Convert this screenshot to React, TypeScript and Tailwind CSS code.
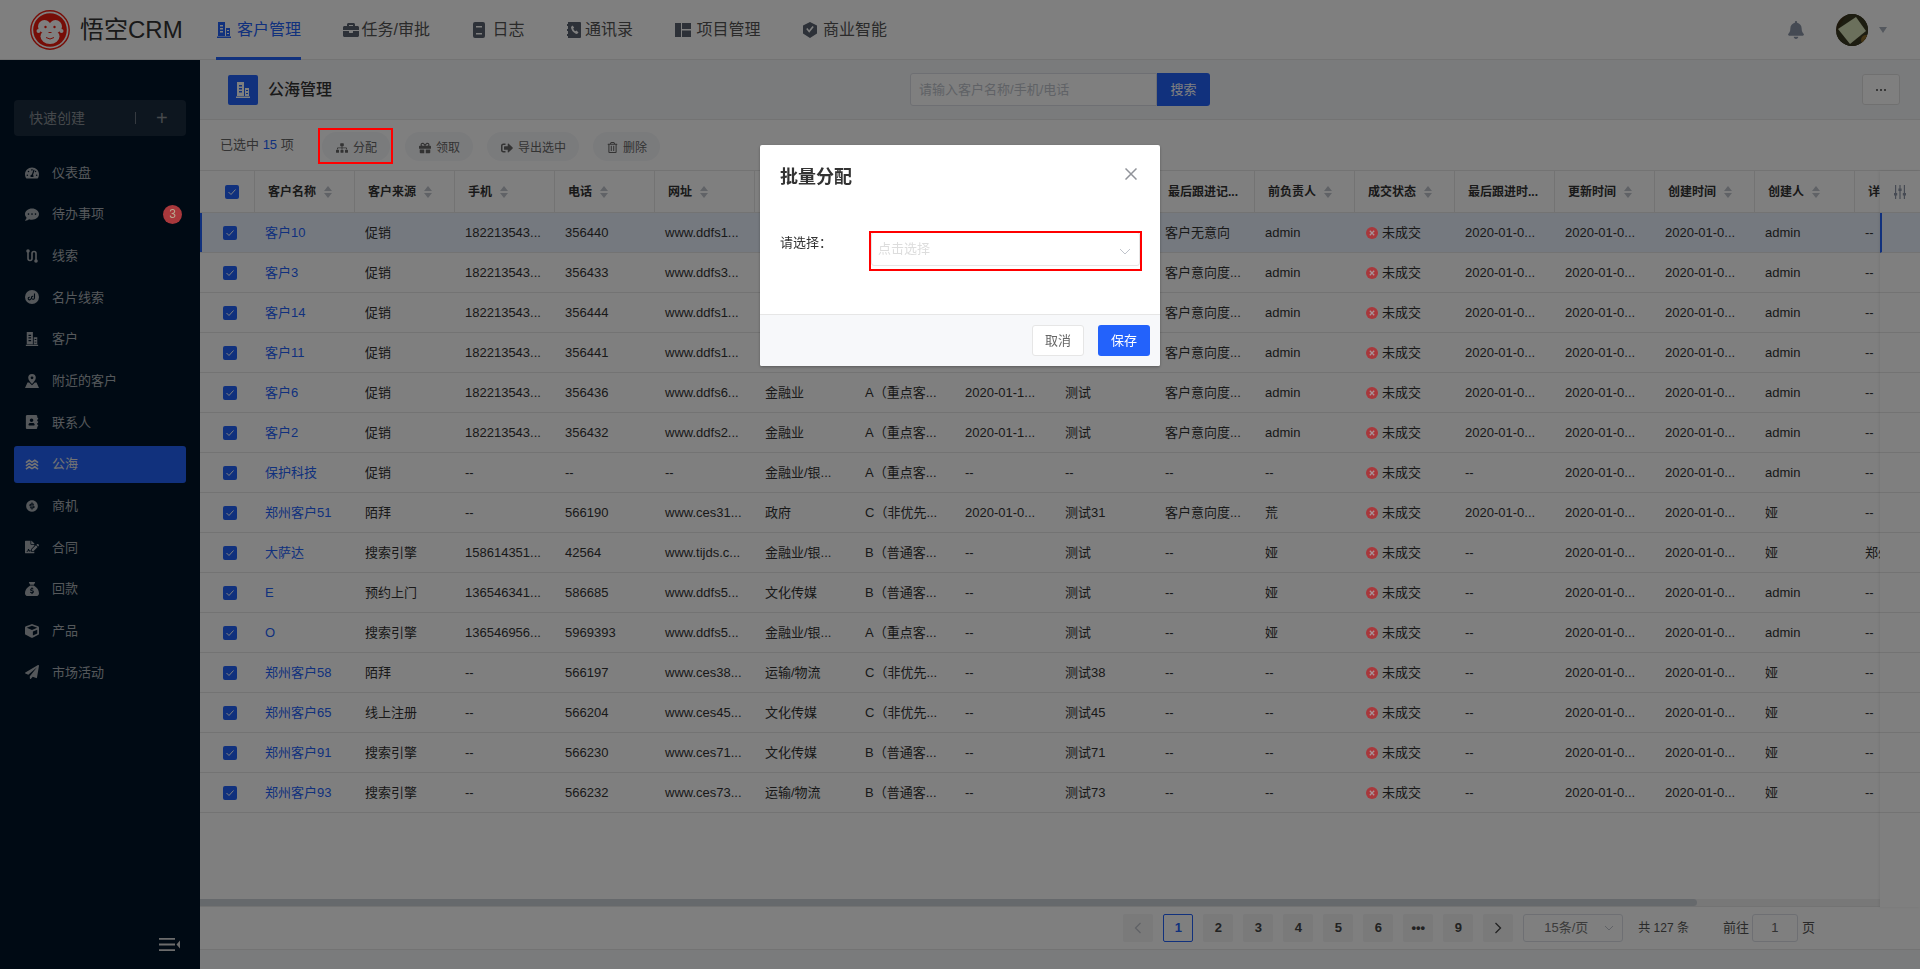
import type { ReactNode } from 'react';
import {
  FaAddressBook,
  FaBell,
  FaBriefcase,
  FaCommentDots,
  FaCube,
  FaFileSignature,
  FaGift,
  FaPaperPlane,
  FaRegTrashAlt,
  FaSignOutAlt,
  FaSitemap,
  FaTachometerAlt,
} from 'react-icons/fa';
import { FaSackDollar } from 'react-icons/fa6';
import { RiMoneyDollarCircleFill } from 'react-icons/ri';

function BuildingIcon({ size = 16 }: { size?: number }) {
  return (
    <svg width={size} height={size} viewBox="0 0 16 16" fill="currentColor">
      <path
        fillRule="evenodd"
        d="M2 0h7v14H2V0zm2 3v1.500h3V3H4zm0 3v1.500h3V6H4zm0 3v1.500h3V9H4zm6-3h4v8h-4V6zm1 2v1h2V8h-2zm0 3v1h2v-1h-2zM1 14.500h14V16H1v-1.500z"
      />
    </svg>
  );
}

function LogIcon() {
  return (
    <svg width="16" height="16" viewBox="0 0 16 16" fill="currentColor">
      <path fillRule="evenodd" d="M4 0h8a2 2 0 0 1 2 2v12a2 2 0 0 1-2 2H4a2 2 0 0 1-2-2V2a2 2 0 0 1 2-2zm1 4v1.500h6V4H5zm0 7v1.500h6V11H5z" />
    </svg>
  );
}

function ContactsIcon() {
  return (
    <svg width="16" height="16" viewBox="0 0 16 16" fill="currentColor">
      <path
        fillRule="evenodd"
        d="M2 0h12a1 1 0 0 1 1 1v14a1 1 0 0 1-1 1H2v-2H1v-2h1V9H1V7h1V4H1V2h1V0zm4.500 3.500L5 5c.2 3 2.800 6.500 6 7l1.500-1.500-2-2-1.200.8C8.200 8.700 7.500 7.600 7.200 6.500l1-1-1.700-2z"
      />
    </svg>
  );
}

function ProjectIcon() {
  return (
    <svg width="16" height="16" viewBox="0 0 16 16" fill="currentColor">
      <path d="M0 1h6v14H0V1zm7 0h9v6H7V1zm0 7.500h9V15H7V8.500z" />
    </svg>
  );
}

function ShieldCheckIcon() {
  return (
    <svg width="16" height="16" viewBox="0 0 16 16" fill="currentColor">
      <path
        fillRule="evenodd"
        d="M8 0l7 3.500v8L8 16l-7-4.500v-8L8 0zM4.200 7l3 3.800L11.800 5 10.500 4 7.100 8.300 5.500 6 4.200 7z"
      />
    </svg>
  );
}

function LeadsIcon() {
  return (
    <svg width="14" height="14" viewBox="0 0 14 14" fill="currentColor">
      <path d="M3 2v7.500a2 2 0 0 0 4 0v-5a2 2 0 0 1 4 0V12" fill="none" stroke="currentColor" strokeWidth="1.600" />
      <circle cx="3" cy="2" r="1.800" />
      <circle cx="11" cy="12" r="1.800" />
    </svg>
  );
}

function CardLeadsIcon() {
  return (
    <svg width="14" height="14" viewBox="0 0 14 14">
      <circle cx="7" cy="7" r="7" fill="currentColor" />
      <path d="M9.500 3.500v4.200a1.500 1.500 0 1 1-1.200-1.400M5.800 8.500a1.300 1.300 0 1 1-1-1.200" fill="none" stroke="#001529" strokeWidth="1.100" />
    </svg>
  );
}

function NearbyIcon() {
  return (
    <svg width="14" height="14" viewBox="0 0 14 14" fill="currentColor">
      <path fillRule="evenodd" d="M7 0a3.800 3.800 0 0 1 3.800 3.800C10.800 6 8.500 8.500 7 10 5.500 8.500 3.200 6 3.200 3.800A3.800 3.800 0 0 1 7 0zm0 2.400a1.400 1.400 0 1 0 0 2.800 1.400 1.400 0 0 0 0-2.800z" />
      <path d="M2.500 8.500h1.600L7 11.300l2.900-2.800h1.600L14 14H0l2.500-5.500z" />
    </svg>
  );
}

function WavesIcon() {
  return (
    <svg width="15" height="14" viewBox="0 0 15 14" fill="none" stroke="currentColor" strokeWidth="1.700">
      <path d="M1 5.500L4.500 3l3 2 3-2L14 5.500" />
      <path d="M1 9l3.500-2.500 3 2 3-2L14 9" />
      <path d="M1 12.500L4.500 10l3 2 3-2 3.500 2.500" />
    </svg>
  );
}

function CollapseIcon() {
  return (
    <svg width="21" height="13" viewBox="0 0 21 13" fill="currentColor">
      <path d="M0 0h16v1.800H0zM0 5.600h16v1.800H0zM0 11.200h16V13H0zM21 2.500v8l-3.500-4z" />
    </svg>
  );
}

function SlidersIcon() {
  return (
    <svg width="12" height="14" viewBox="0 0 12 14" fill="currentColor">
      <path d="M1 0h1.200v14H1zM5.400 0h1.200v14H5.400zM9.800 0H11v14H9.800zM0 8h3.200v2.500H0zM4.400 3.500h3.200V6H4.400zM8.800 8H12v2.500H8.800z" />
    </svg>
  );
}

// the reds in the picture are brighter than the mask allows, so these sit above it
function StatusIcon() {
  return (
    <svg width="12" height="12" viewBox="0 0 12 12" className="relative z-20 shrink-0">
      <circle cx="6" cy="6" r="6" fill="#a8383c" />
      <path d="M3.800 3.800l4.400 4.400M8.200 3.800L3.800 8.200" stroke="#a89498" strokeWidth="1.300" />
    </svg>
  );
}

function Logo() {
  return (
    <svg width="40" height="40" viewBox="0 0 40 40">
      <circle cx="20" cy="20" r="19.200" fill="none" stroke="#ee1a0e" strokeWidth="1.400" />
      <circle cx="20" cy="20" r="16.800" fill="#ee1a0e" />
      <circle cx="14.500" cy="16.500" r="6.500" fill="#fff" />
      <circle cx="25.500" cy="16.500" r="6.500" fill="#fff" />
      <ellipse cx="20" cy="26.500" rx="9.500" ry="7.500" fill="#fff" />
      <circle cx="8.500" cy="21" r="2" fill="#fff" />
      <circle cx="31.500" cy="21" r="2" fill="#fff" />
      <circle cx="15.500" cy="17" r="1.200" fill="#ee1a0e" />
      <circle cx="24.500" cy="17" r="1.200" fill="#ee1a0e" />
      <path d="M18.500 22.500h3" stroke="#ee1a0e" strokeWidth="1" />
      <path d="M16 27.500q4 3 8 0" fill="none" stroke="#ee1a0e" strokeWidth="1" />
    </svg>
  );
}

function Avatar() {
  return (
    <svg width="32" height="32" viewBox="0 0 32 32" className="rounded-full">
      <rect width="32" height="32" fill="#3a3018" />
      <path d="M0 32V20L5 10l6-10h21v32z" fill="#3a3a22" />
      <path d="M2 15L20 3l10 14-16 13z" fill="#d6e0b8" />
      <circle cx="30" cy="26" r="5" fill="#8a6a2a" />
    </svg>
  );
}

const NAV: { label: string; icon: ReactNode; gap: string; active?: boolean }[] = [
  { label: '客户管理', icon: <BuildingIcon />, gap: 'gap-[5px]', active: true },
  { label: '任务/审批', icon: <FaBriefcase size={16} />, gap: 'gap-[3px]' },
  { label: '日志', icon: <LogIcon />, gap: 'gap-[5px]' },
  { label: '通讯录', icon: <ContactsIcon />, gap: 'gap-[3px]' },
  { label: '项目管理', icon: <ProjectIcon />, gap: 'gap-[6px]' },
  { label: '商业智能', icon: <ShieldCheckIcon />, gap: 'gap-[5px]' },
];

const MENU: { label: string; icon: ReactNode; badge?: number; active?: boolean }[] = [
  { label: '仪表盘', icon: <FaTachometerAlt size={14} /> },
  { label: '待办事项', icon: <FaCommentDots size={15} />, badge: 3 },
  { label: '线索', icon: <LeadsIcon /> },
  { label: '名片线索', icon: <CardLeadsIcon /> },
  { label: '客户', icon: <BuildingIcon size={14} /> },
  { label: '附近的客户', icon: <NearbyIcon /> },
  { label: '联系人', icon: <FaAddressBook size={14} /> },
  { label: '公海', icon: <WavesIcon />, active: true },
  { label: '商机', icon: <RiMoneyDollarCircleFill size={16} /> },
  { label: '合同', icon: <FaFileSignature size={14} /> },
  { label: '回款', icon: <FaSackDollar size={14} /> },
  { label: '产品', icon: <FaCube size={14} /> },
  { label: '市场活动', icon: <FaPaperPlane size={14} /> },
];

const HEADERS: { label: string; sort?: boolean }[] = [
  { label: '客户名称', sort: true },
  { label: '客户来源', sort: true },
  { label: '手机', sort: true },
  { label: '电话', sort: true },
  { label: '网址', sort: true },
  { label: '客户行业', sort: true },
  { label: '客户级别', sort: true },
  { label: '下次联系时...' },
  { label: '备注', sort: true },
  { label: '最后跟进记...' },
  { label: '前负责人', sort: true },
  { label: '成交状态', sort: true },
  { label: '最后跟进时...' },
  { label: '更新时间', sort: true },
  { label: '创建时间', sort: true },
  { label: '创建人', sort: true },
  { label: '详细地址', sort: true },
];

const D = '2020-01-0...';
const D1 = '2020-01-1...';
const LA = 'A（重点客...';
const LB = 'B（普通客...';
const LC = 'C（非优先...';
const REC = '客户意向度...';
const PHONE = '182213543...';

// name, source, phone, tel, site, industry, level, next, remark, record, owner, last follow, creator, address
const ROWS: string[][] = [
  ['客户10', '促销', PHONE, '356440', 'www.ddfs1...', '金融业', LA, D1, '测试', '客户无意向', 'admin', D, 'admin', '--'],
  ['客户3', '促销', PHONE, '356433', 'www.ddfs3...', '金融业', LA, D1, '测试', REC, 'admin', D, 'admin', '--'],
  ['客户14', '促销', PHONE, '356444', 'www.ddfs1...', '金融业', LA, D1, '测试', REC, 'admin', D, 'admin', '--'],
  ['客户11', '促销', PHONE, '356441', 'www.ddfs1...', '金融业', LA, D1, '测试', REC, 'admin', D, 'admin', '--'],
  ['客户6', '促销', PHONE, '356436', 'www.ddfs6...', '金融业', LA, D1, '测试', REC, 'admin', D, 'admin', '--'],
  ['客户2', '促销', PHONE, '356432', 'www.ddfs2...', '金融业', LA, D1, '测试', REC, 'admin', D, 'admin', '--'],
  ['保护科技', '促销', '--', '--', '--', '金融业/银...', LA, '--', '--', '--', '--', '--', 'admin', '--'],
  ['郑州客户51', '陌拜', '--', '566190', 'www.ces31...', '政府', LC, D, '测试31', REC, '荒', D, '娅', '--'],
  ['大萨达', '搜索引擎', '158614351...', '42564', 'www.tijds.c...', '金融业/银...', LB, '--', '测试', '--', '娅', '--', '娅', '郑州市'],
  ['E', '预约上门', '136546341...', '586685', 'www.ddfs5...', '文化传媒', LB, '--', '测试', '--', '娅', '--', 'admin', '--'],
  ['O', '搜索引擎', '136546956...', '5969393', 'www.ddfs5...', '金融业/银...', LA, '--', '测试', '--', '娅', '--', 'admin', '--'],
  ['郑州客户58', '陌拜', '--', '566197', 'www.ces38...', '运输/物流', LC, '--', '测试38', '--', '--', '--', '娅', '--'],
  ['郑州客户65', '线上注册', '--', '566204', 'www.ces45...', '文化传媒', LC, '--', '测试45', '--', '--', '--', '娅', '--'],
  ['郑州客户91', '搜索引擎', '--', '566230', 'www.ces71...', '文化传媒', LB, '--', '测试71', '--', '--', '--', '娅', '--'],
  ['郑州客户93', '搜索引擎', '--', '566232', 'www.ces73...', '运输/物流', LB, '--', '测试73', '--', '--', '--', '娅', '--'],
];

const TOOLS: { label: string; icon: ReactNode }[] = [
  { label: '领取', icon: <FaGift size={12} /> },
  { label: '导出选中', icon: <FaSignOutAlt size={12} /> },
  { label: '删除', icon: <FaRegTrashAlt size={11} /> },
];

const PAGES = ['1', '2', '3', '4', '5', '6', '•••', '9'];

function Checkbox() {
  return (
    <span className="flex h-[14px] w-[14px] items-center justify-center rounded-[2px] bg-[#2362fb]">
      <svg width="10" height="10" viewBox="0 0 10 10" fill="none" stroke="#fff" strokeWidth="1">
        <path d="M1.500 5l2.500 2.500 4.500-5" />
      </svg>
    </span>
  );
}

function SortCaret() {
  return (
    <span className="ml-[8px] flex shrink-0 flex-col gap-[2px]">
      <span className="h-0 w-0 border-x-[4px] border-b-[5px] border-x-transparent border-b-[#c0c4cc]" />
      <span className="h-0 w-0 border-x-[4px] border-t-[5px] border-x-transparent border-t-[#c0c4cc]" />
    </span>
  );
}

function Sidebar() {
  return (
    <aside className="flex w-[200px] shrink-0 flex-col bg-[#001529] px-[14px] pt-[40px]">
      <div className="flex h-[36px] w-[172px] items-center rounded-[4px] bg-[#1a2c3e] pl-[15px] text-[14px] text-[#8c9298]">
        <span>快速创建</span>
        <span className="ml-[50px] h-[12px] w-px bg-[#6a7480]" />
        <span className="ml-[20px] text-[20px] font-light leading-none">+</span>
      </div>
      <nav className="mt-[18px] flex flex-col gap-[4.67px]">
        {MENU.map(item => (
          <div
            key={item.label}
            className={
              item.active
                ? 'flex h-[37px] items-center rounded-[3px] bg-[#2362fb] pl-[11px] text-[13px] text-[#e8e8e8]'
                : 'flex h-[37px] items-center rounded-[3px] pl-[11px] text-[13px] text-[#aab0b6]'
            }
          >
            <span className="flex w-[14px] shrink-0 items-center justify-center">{item.icon}</span>
            <span className="ml-[13px]">{item.label}</span>
            {item.badge ? (
              <span className="relative z-20 ml-auto mr-[4px] flex h-[19px] w-[19px] items-center justify-center rounded-full bg-[#a8383c] text-[12px] text-[#b8a890]">
                {item.badge}
              </span>
            ) : null}
          </div>
        ))}
      </nav>
      <div className="mt-auto flex justify-end pb-[18px] pr-[6px] text-[#d8d8d8]">
        <CollapseIcon />
      </div>
    </aside>
  );
}

function TopBar() {
  return (
    <header className="flex h-[60px] shrink-0 items-stretch border-b border-[#e6e6e6] bg-white shadow-[0_1px_2px_rgba(0,0,0,0.15)]">
      <div className="flex w-[216px] shrink-0 items-center pl-[30px]">
        <Logo />
        <span className="ml-[10px] whitespace-nowrap text-[24px] font-normal leading-none text-[#333]">悟空CRM</span>
      </div>
      <nav className="flex gap-[41.5px]">
        {NAV.map(item => (
          <div
            key={item.label}
            className={
              item.active
                ? 'flex h-[60px] items-center gap-[5px] border-b-[3px] border-[#2362fb] pt-[2px] text-[16px] text-[#2362fb]'
                : `flex h-[60px] items-center ${item.gap} border-b-[3px] border-transparent pt-[2px] text-[16px] text-[#5a6270]`
            }
          >
            {item.icon}
            <span className={item.active ? 'text-[#2362fb]' : 'text-[#555]'}>{item.label}</span>
          </div>
        ))}
      </nav>
      <div className="ml-auto flex items-center pr-[33px] text-[#8a94a6]">
        <FaBell size={18} />
        <span className="ml-[31px]">
          <Avatar />
        </span>
        <span className="ml-[11px] h-0 w-0 border-x-[4.500px] border-t-[6px] border-x-transparent border-t-[#a8b0bc]" />
      </div>
    </header>
  );
}

function PageHead() {
  return (
    <div className="flex h-[60px] shrink-0 items-center border-b border-[#e6e6e6] bg-[#f5f6f9] pl-[28px]">
      <span className="flex h-[30px] w-[30px] items-center justify-center rounded-[2px] bg-[#2362fb] text-white">
        <BuildingIcon />
      </span>
      <span className="ml-[10px] text-[16px] font-medium text-[#333]">公海管理</span>
      <div className="ml-[578px] flex h-[33px] w-[300px]">
        <div className="flex w-[247px] items-center rounded-l-[3px] border border-[#dcdfe6] bg-white pl-[8px] text-[13px] text-[#c0c4cc]">
          请输入客户名称/手机/电话
        </div>
        <div className="flex w-[53px] items-center justify-center rounded-r-[3px] bg-[#2362fb] text-[13px] text-white">搜索</div>
      </div>
      <div className="ml-auto mr-[20px] flex h-[31px] w-[38px] items-center justify-center gap-[2px] rounded-[3px] border border-[#e1e1e1] bg-white">
        <span className="h-[2px] w-[2px] rounded-full bg-[#444]" />
        <span className="h-[2px] w-[2px] rounded-full bg-[#444]" />
        <span className="h-[2px] w-[2px] rounded-full bg-[#444]" />
      </div>
    </div>
  );
}

function ToolButton({ label, icon }: { label: string; icon: ReactNode }) {
  return (
    <div className="flex h-[29px] items-center gap-[5px] rounded-full bg-[#f5f6f9] pl-[14px] pr-[13px] pt-[3px] text-[12px] text-[#666]">
      {icon}
      <span>{label}</span>
    </div>
  );
}

function Toolbar() {
  return (
    <div className="flex h-[51px] shrink-0 items-center border-b border-[#e6e6e6] bg-white pl-[20px]">
      <span className="w-[102px] text-[13px] text-[#666]">
        已选中 <span className="text-[#2362fb]">15</span> 项
      </span>
      <div className="relative mt-[2px]">
        <ToolButton label="分配" icon={<FaSitemap size={12} />} />
        <div className="absolute -bottom-[3px] -left-[4px] -right-[3px] -top-[4px] z-20 border-2 border-[#f00]" />
      </div>
      <div className="ml-[15px] mt-[2px] flex gap-[14px]">
        {TOOLS.map(tool => (
          <ToolButton key={tool.label} label={tool.label} icon={tool.icon} />
        ))}
      </div>
    </div>
  );
}

function DataTable() {
  return (
    <div className="relative flex min-h-0 flex-1 flex-col bg-white">
      <div className="min-h-0 flex-1 overflow-hidden">
        <table className="w-[1755px] table-fixed border-separate border-spacing-0 text-[13px] text-[#333]">
          <colgroup>
            <col className="w-[55px]" />
            {HEADERS.map(h => (
              <col key={h.label} className="w-[100px]" />
            ))}
          </colgroup>
          <thead>
            <tr>
              <th className="h-[42px] border-b border-r border-[#e6e6e6] pl-[25px]">
                <Checkbox />
              </th>
              {HEADERS.map(h => (
                <th key={h.label} className="h-[42px] overflow-hidden border-b border-r border-[#e6e6e6] pl-[13px] text-left text-[12px] font-bold">
                  <div className="flex items-center whitespace-nowrap">
                    {h.label}
                    {h.sort ? <SortCaret /> : null}
                  </div>
                </th>
              ))}
            </tr>
          </thead>
          <tbody>
            {ROWS.map((row, rowIndex) => {
              const [name, source, phone, tel, site, industry, level, next, remark, record, owner, last, creator, addr] = row;
              const cells = [source, phone, tel, site, industry, level, next, remark, record, owner];
              const cellClass =
                rowIndex === 0
                  ? 'h-[40px] overflow-hidden whitespace-nowrap border-b border-[#e6e6e6] bg-[#ebf3ff] pl-[10px]'
                  : 'h-[40px] overflow-hidden whitespace-nowrap border-b border-[#e6e6e6] pl-[10px]';
              return (
                <tr key={name}>
                  <td
                    className={
                      rowIndex === 0
                        ? 'h-[40px] border-b border-[#e6e6e6] bg-[#ebf3ff] pl-[23px] shadow-[inset_2px_0_0_#2362fb]'
                        : 'h-[40px] border-b border-[#e6e6e6] pl-[23px]'
                    }
                  >
                    <Checkbox />
                  </td>
                  <td className={cellClass}>
                    <span className="text-[#2362fb]">{name}</span>
                  </td>
                  {cells.map((cell, i) => (
                    <td key={i} className={cellClass}>
                      {cell}
                    </td>
                  ))}
                  <td className={cellClass}>
                    <span className="flex items-center gap-[4px] pl-[1px]">
                      <StatusIcon />
                      未成交
                    </span>
                  </td>
                  <td className={cellClass}>{last}</td>
                  <td className={cellClass}>{D}</td>
                  <td className={cellClass}>{D}</td>
                  <td className={cellClass}>{creator}</td>
                  <td className={cellClass}>{addr}</td>
                </tr>
              );
            })}
          </tbody>
        </table>
      </div>
      <div className="h-[8px] shrink-0 border-b border-[#e6e6e6] bg-[#f1f1f1]">
        <div className="h-[7px] w-[1497px] rounded-r-[4px] bg-[#ccd2d9]" />
      </div>
      {/* fixed column on the right, lies over the scrolled table */}
      <div className="absolute bottom-0 right-0 top-0 w-[40px] bg-white shadow-[-1px_0_3px_rgba(0,0,0,0.08)]">
        <div className="flex h-[42px] items-center justify-center border-b border-[#e6e6e6] text-[#8e97a8]">
          <SlidersIcon />
        </div>
        {ROWS.map((row, rowIndex) => (
          <div
            key={row[0]}
            className={
              rowIndex === 0
                ? 'h-[40px] border-b border-l-2 border-[#e6e6e6] border-l-[#2362fb] bg-[#ebf3ff]'
                : 'h-[40px] border-b border-[#e6e6e6]'
            }
          />
        ))}
      </div>
    </div>
  );
}

function Pagination() {
  return (
    <div className="flex h-[43px] shrink-0 items-center justify-end border-b border-[#e6e6e6] bg-white pr-[105px] text-[13px] text-[#555]">
      <div className="flex gap-[10px] font-bold">
        <span className="flex h-[28px] w-[30px] items-center justify-center rounded-[2px] bg-[#f4f4f5] text-[#c0c4cc]">
          <svg width="8" height="12" viewBox="0 0 8 12" fill="none" stroke="currentColor" strokeWidth="1.300">
            <path d="M6.500 1L1.500 6l5 5" />
          </svg>
        </span>
        {PAGES.map(p => (
          <span
            key={p}
            className={
              p === '1'
                ? 'flex h-[28px] w-[30px] items-center justify-center rounded-[2px] border border-[#2362fb] bg-white text-[#2362fb]'
                : 'flex h-[28px] w-[30px] items-center justify-center rounded-[2px] bg-[#f4f4f5] text-[#444]'
            }
          >
            {p}
          </span>
        ))}
        <span className="flex h-[28px] w-[30px] items-center justify-center rounded-[2px] bg-[#f4f4f5] text-[#444]">
          <svg width="8" height="12" viewBox="0 0 8 12" fill="none" stroke="currentColor" strokeWidth="1.300">
            <path d="M1.500 1l5 5-5 5" />
          </svg>
        </span>
      </div>
      <div className="ml-[10px] flex h-[28px] w-[100px] items-center rounded-[3px] border border-[#dcdfe6] pl-[20px] pr-[8px] text-[#777]">
        15条/页
        <svg className="ml-auto text-[#c0c4cc]" width="10" height="6" viewBox="0 0 10 6" fill="none" stroke="currentColor">
          <path d="M1 1l4 4 4-4" />
        </svg>
      </div>
      <span className="ml-[15px] text-[12px]">共 127 条</span>
      <span className="ml-[34px]">前往</span>
      <span className="mx-[3px] flex h-[28px] w-[46px] items-center justify-center rounded-[3px] border border-[#dcdfe6] text-[#666]">1</span>
      <span className="ml-[1px]">页</span>
    </div>
  );
}

function AssignDialog() {
  return (
    <div className="fixed inset-0 z-10 flex items-start justify-center bg-black/50">
      <div className="relative mt-[145px] w-[400px] overflow-hidden rounded-[2px] bg-white shadow-[0_1px_3px_rgba(0,0,0,0.3)]">
        <div className="h-[64px] pl-[20px] pt-[20px] text-[18px] font-bold leading-[24px] text-[#333]">批量分配</div>
        <svg className="absolute right-[23px] top-[23px] text-[#909399]" width="12" height="12" viewBox="0 0 12 12" stroke="currentColor" strokeWidth="1.500">
          <path d="M0.500 0.500l11 11M11.500 0.500l-11 11" />
        </svg>
        <div className="flex h-[105px] pl-[20px] pt-[23px]">
          <span className="w-[91px] text-[13px] leading-[22px] text-[#333]">请选择：</span>
          <div className="relative h-[34px] w-[269px]">
            <div className="flex h-[34px] items-center rounded-[3px] border border-[#e6e6e6] pl-[6px] pr-[8px] text-[13px] text-[#ddd]">
              点击选择
              <svg className="ml-auto mt-[4px] text-[#c0c4cc]" width="12" height="7" viewBox="0 0 12 7" fill="none" stroke="currentColor">
                <path d="M1 1l5 5 5-5" />
              </svg>
            </div>
            <div className="absolute -bottom-[5px] -left-[2px] -right-[2px] -top-[1px] border-2 border-[#f00]" />
          </div>
        </div>
        <div className="flex h-[52px] items-center justify-end gap-[14px] border-t border-[#e6e6e6] bg-[#f7f8fa] pr-[10px]">
          <span className="flex h-[31px] w-[52px] items-center justify-center rounded-[3px] border border-[#e6e6e6] bg-white text-[13px] text-[#666]">取消</span>
          <span className="flex h-[31px] w-[52px] items-center justify-center rounded-[3px] bg-[#2362fb] text-[13px] text-white">保存</span>
        </div>
      </div>
    </div>
  );
}

export default function App() {
  return (
    <div className="flex h-screen w-full flex-col overflow-hidden bg-[#f5f6f9] [font-family:'Liberation_Sans','Noto_Sans_CJK_SC',sans-serif]">
      <TopBar />
      <div className="flex min-h-0 flex-1">
        <Sidebar />
        <main className="flex min-w-0 flex-1 flex-col pb-[19px]">
          <PageHead />
          <Toolbar />
          <DataTable />
          <Pagination />
        </main>
      </div>
      <AssignDialog />
    </div>
  );
}
